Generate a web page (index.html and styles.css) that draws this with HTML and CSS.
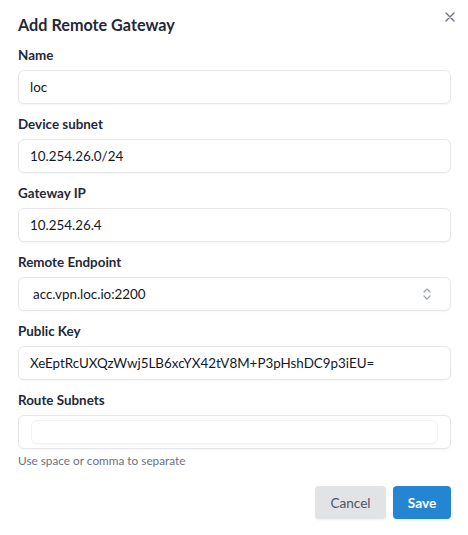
FILE: index.html
```html
<!DOCTYPE html>
<html lang="en">
<head>
<meta charset="utf-8">
<title>Add Remote Gateway</title>
<link rel="stylesheet" href="styles.css">
</head>
<body>
<div class="dialog">
  <button class="close" aria-label="Close">
    <svg width="10" height="10" viewBox="0 0 10 10"><path d="M1 1L9 9M9 1L1 9" stroke="#6b7280" stroke-width="1.4" stroke-linecap="round" fill="none"/></svg>
  </button>
  <h2 class="title">Add Remote Gateway</h2>
  <div class="fields">
    <div class="field">
      <label class="label">Name</label>
      <div class="input">loc</div>
    </div>
    <div class="field">
      <label class="label">Device subnet</label>
      <div class="input">10.254.26.0/24</div>
    </div>
    <div class="field">
      <label class="label">Gateway IP</label>
      <div class="input">10.254.26.4</div>
    </div>
    <div class="field">
      <label class="label">Remote Endpoint</label>
      <div class="input select">
        <span>acc.vpn.loc.io:2200</span>
        <svg class="chev" width="10" height="14" viewBox="0 0 10 14"><path d="M2 5L5 2L8 5M2 9L5 12L8 9" stroke="#9ca3af" stroke-width="1.2" fill="none" stroke-linecap="round" stroke-linejoin="round"/></svg>
      </div>
    </div>
    <div class="field">
      <label class="label">Public Key</label>
      <div class="input">XeEptRcUXQzWwj5LB6xcYX42tV8M+P3pHshDC9p3iEU=</div>
    </div>
    <div class="field">
      <label class="label">Route Subnets</label>
      <div class="input tags"><div class="tag-inner"></div></div>
      <div class="help">Use space or comma to separate</div>
    </div>
  </div>
  <div class="actions">
    <button class="btn cancel">Cancel</button>
    <button class="btn save">Save</button>
  </div>
</div>
</body>
</html>
```
FILE: styles.css
```css
* { box-sizing: border-box; }
html, body { margin: 0; padding: 0; background: #ffffff; }
body {
  font-family: Lato, "Open Sans", "Liberation Sans", sans-serif;
  color: #111827;
  width: 468px;
  height: 535px;
}
.dialog {
  position: relative;
  padding: 13px 17px 0 18px;
}
.close {
  position: absolute;
  top: 11px;
  right: 12px;
  width: 12px;
  height: 12px;
  padding: 1px;
  border: 0;
  background: transparent;
  display: flex;
  align-items: center;
  justify-content: center;
}
.title {
  margin: 0;
  font-size: 16.2px;
  line-height: 24px;
  font-weight: 700;
  color: #1f2937;
}
.fields {
  margin-top: 8px;
  display: flex;
  flex-direction: column;
  gap: 10px;
}
.field {
  display: flex;
  flex-direction: column;
}
.label {
  font-size: 13.4px;
  line-height: 20px;
  font-weight: 700;
  color: #1f2937;
  margin-bottom: 5px;
}
.input {
  height: 34px;
  border: 1px solid #e5e7eb;
  border-radius: 6px;
  box-shadow: 0 1px 2px rgba(0, 0, 0, 0.04);
  padding: 0 11px;
  display: flex;
  align-items: center;
  font-size: 13.4px;
  color: #111827;
  background: #ffffff;
}
.select {
  justify-content: space-between;
  padding-left: 14px;
  padding-right: 18px;
}
.chev { display: block; }
.tags {
  padding: 5px 12px;
}
.tag-inner {
  width: 100%;
  height: 24px;
  border: 1px solid #f1f2f4;
  border-radius: 6px;
  box-shadow: 0 1px 1px rgba(0, 0, 0, 0.03);
}
.help {
  margin-top: 4px;
  font-size: 11.8px;
  line-height: 16px;
  color: #6b7280;
}
.actions {
  margin-top: 17px;
  display: flex;
  justify-content: flex-end;
  gap: 7px;
}
.btn {
  height: 33px;
  border: 0;
  border-radius: 4px;
  font-family: Lato, "Open Sans", "Liberation Sans", sans-serif;
  font-size: 13.6px;
  padding: 0;
  box-shadow: 0 1px 2px rgba(0, 0, 0, 0.08);
}
.cancel {
  width: 71px;
  background: #e2e3e5;
  color: #4b5563;
}
.save {
  width: 58px;
  background: #2485d2;
  color: #ffffff;
  font-weight: 700;
}
```
